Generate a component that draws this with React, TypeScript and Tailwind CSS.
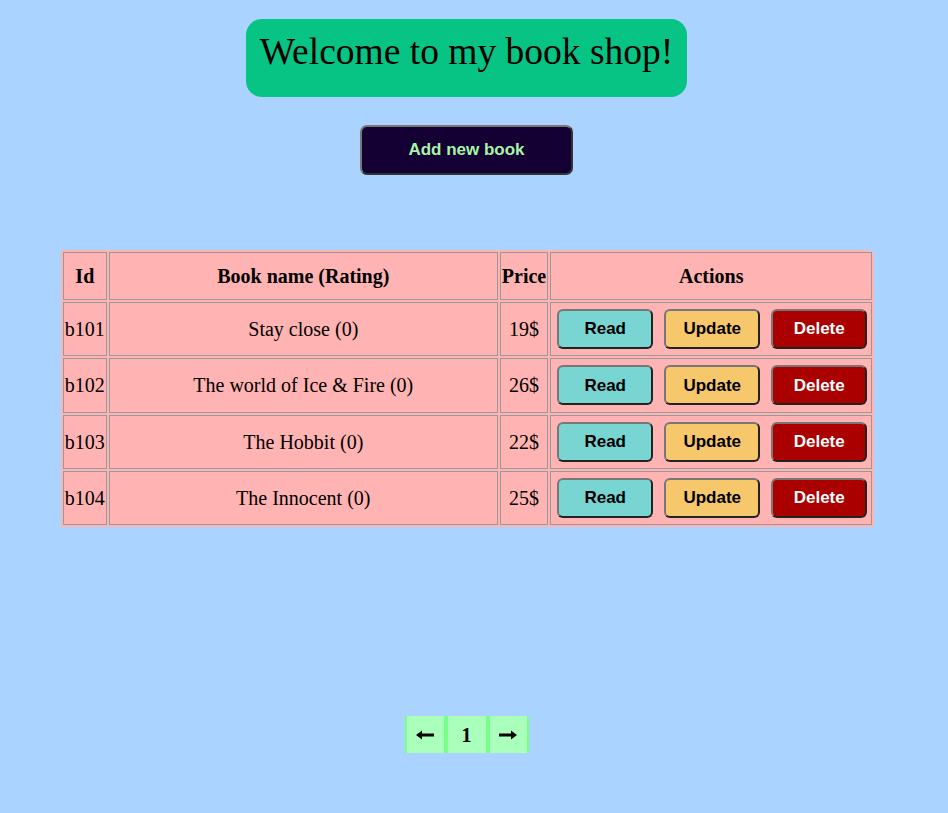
import React from "react";

const books = [
	{ id: "b101", name: "Stay close", rating: 0, price: 19 },
	{ id: "b102", name: "The world of Ice & Fire", rating: 0, price: 26 },
	{ id: "b103", name: "The Hobbit", rating: 0, price: 22 },
	{ id: "b104", name: "The Innocent", rating: 0, price: 25 },
];

const btn =
	"w-[96px] h-[40px] rounded-[6px] border-2 border-t-[#777] border-l-[#777] border-b-[#222] border-r-[#222] text-[17px] font-bold font-['Liberation_Sans',Arial,sans-serif]";

function Arrow({ left }: { left?: boolean }) {
	return (
		<svg width="18" height="10" viewBox="0 0 18 10" className={left ? "" : "rotate-180"}>
			<path d="M0 5 L6 0.5 L6 3.5 L18 3.5 L18 6.5 L6 6.5 L6 9.5 Z" fill="#000" />
		</svg>
	);
}

export default function App() {
	return (
		<div className="min-h-[813px] w-full bg-[#aad4ff] font-['Liberation_Serif','Times_New_Roman',serif] text-black">
			<div className="w-[933px] flex flex-col items-center pt-[19px]">
				<h1 className="bg-[#07c384] rounded-[16px] px-[14px] pb-[12px] h-[78px] flex items-center text-[37.5px] leading-none">
					Welcome to my book shop!
				</h1>

				<button className="mt-[28px] w-[213px] h-[50px] bg-[#150033] rounded-[7px] border-2 border-t-[#777] border-l-[#777] border-b-[#333] border-r-[#333] text-[#a6f5a6] text-[17px] font-bold font-['Liberation_Sans',Arial,sans-serif]">
					Add new book
				</button>

				<table className="mt-[75px] ml-[2px] bg-[#ffb3b3] rounded-tr-[6px] border-separate border-spacing-[2px] text-[20px]">
					<thead>
						<tr className="h-[48px]">
							<th className="w-[44px] border border-[#999] p-px">Id</th>
							<th className="w-[389px] border border-[#999] p-px">Book name (Rating)</th>
							<th className="w-[48px] border border-[#999] p-px">Price</th>
							<th className="w-[322px] border border-[#999] p-px">Actions</th>
						</tr>
					</thead>
					<tbody>
						{books.map((b) => (
							<tr key={b.id} className="h-[54.33px]">
								<td className="border border-[#999] p-px text-center">{b.id}</td>
								<td className="border border-[#999] p-px text-center">
									{b.name} ({b.rating})
								</td>
								<td className="border border-[#999] p-px text-center">{b.price}$</td>
								<td className="border border-[#999] p-px">
									<div className="flex gap-[11px] pl-[5px]">
										<button className={`${btn} bg-[#79d5d1] text-black`}>Read</button>
										<button className={`${btn} bg-[#f7c86b] text-black`}>Update</button>
										<button className={`${btn} bg-[#aa0000] text-white`}>Delete</button>
									</div>
								</td>
							</tr>
						))}
					</tbody>
				</table>

				<div className="mt-[189px] flex">
					<button className="w-[41px] h-[37px] bg-[#aaffbb] border-x-2 border-[#77ff88] flex items-center justify-center">
						<Arrow left />
					</button>
					<button className="w-[42px] h-[37px] bg-[#aaffbb] border-x-2 border-[#77ff88] text-[20px] font-bold">
						1
					</button>
					<button className="w-[41px] h-[37px] bg-[#aaffbb] border-x-2 border-[#77ff88] flex items-center justify-center">
						<Arrow />
					</button>
				</div>
			</div>
		</div>
	);
}
